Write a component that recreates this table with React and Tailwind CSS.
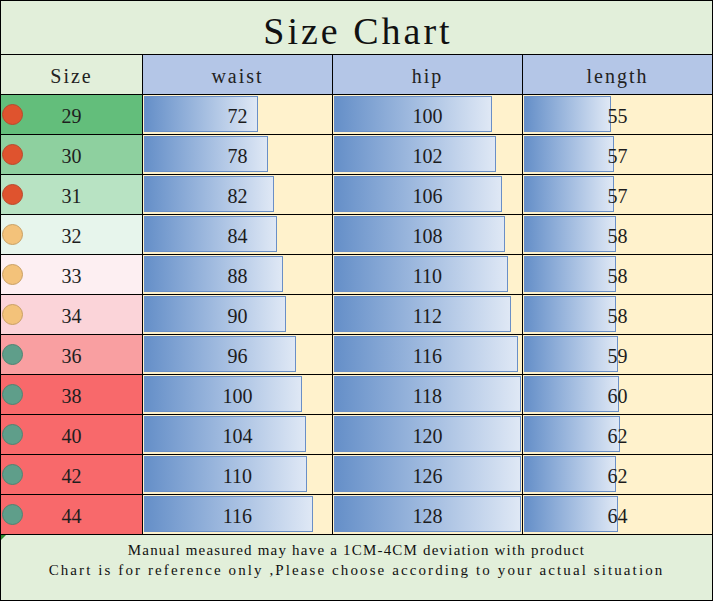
const rows = [
  { size: 29, dot: 'red', bg: 'bg-[#63be7b]', waist: [72, 114], hip: [100, 158], length: [55, 87] },
  { size: 30, dot: 'red', bg: 'bg-[#8ed09f]', waist: [78, 124], hip: [102, 162], length: [57, 90] },
  { size: 31, dot: 'red', bg: 'bg-[#b8e3c3]', waist: [82, 130], hip: [106, 168], length: [57, 90] },
  { size: 32, dot: 'amber', bg: 'bg-[#e7f5ec]', waist: [84, 133], hip: [108, 171], length: [58, 92] },
  { size: 33, dot: 'amber', bg: 'bg-[#fdeff2]', waist: [88, 139], hip: [110, 174], length: [58, 92] },
  { size: 34, dot: 'amber', bg: 'bg-[#fbd4d9]', waist: [90, 142], hip: [112, 177], length: [58, 92] },
  { size: 36, dot: 'teal', bg: 'bg-[#f99fa1]', waist: [96, 152], hip: [116, 184], length: [59, 94] },
  { size: 38, dot: 'teal', bg: 'bg-[#f8696b]', waist: [100, 158], hip: [118, 187], length: [60, 95] },
  { size: 40, dot: 'teal', bg: 'bg-[#f8696b]', waist: [104, 162], hip: [120, 187], length: [62, 96] },
  { size: 42, dot: 'teal', bg: 'bg-[#f8696b]', waist: [110, 163], hip: [126, 187], length: [62, 92] },
  { size: 44, dot: 'teal', bg: 'bg-[#f8696b]', waist: [116, 169], hip: [128, 187], length: [64, 94] },
]

const dotStyles = {
  red: 'bg-[#df532e] border-[#b9482c]',
  amber: 'bg-[#f3c27a] border-[#c9a064]',
  teal: 'bg-[#5f9e8a] border-[#4d8472]',
}

const BarCell = ({ value, width }) => (
  <div className="relative bg-[#fff2cc] h-[39px] flex items-center justify-center">
    {/* data bar behind the number */}
    <div
      className="absolute left-px top-px h-[36px] border border-[#6a8fc6] bg-gradient-to-r from-[#658fc8] to-[#dfe8f5]"
      style={{ width }}
    />
    <span className="relative pt-[3px] text-[20px] text-[#1c1c1c]">{value}</span>
  </div>
)

export default function App() {
  return (
    <div className="w-[713px] h-[601px] bg-black p-px font-['Liberation_Serif',serif]">
      <div className="grid grid-cols-[141px_189px_189px_189px] gap-px">
        {/* Title */}
        <div className="col-span-4 h-[53px] bg-[#e2efda] flex items-center justify-center pt-[8px] pl-[3px] text-[38px] tracking-[3px] text-[#111]">
          Size Chart
        </div>

        {/* Column headings */}
        <div className="h-[39px] bg-[#e2efda] flex items-center justify-center text-[20px] tracking-[2px] text-[#222] pt-[3px]">Size</div>
        <div className="h-[39px] bg-[#b4c6e7] flex items-center justify-center text-[20px] tracking-[2px] text-[#222] pt-[3px]">waist</div>
        <div className="h-[39px] bg-[#b4c6e7] flex items-center justify-center text-[20px] tracking-[2px] text-[#222] pt-[3px]">hip</div>
        <div className="h-[39px] bg-[#b4c6e7] flex items-center justify-center text-[20px] tracking-[2px] text-[#222] pt-[3px]">length</div>

        {rows.map((r) => (
          <div key={r.size} className="contents">
            <div className={`relative h-[39px] flex items-center justify-center ${r.bg}`}>
              <span className={`absolute left-px top-[9px] w-[21px] h-[21px] rounded-full border ${dotStyles[r.dot]}`} />
              <span className="pt-[3px] text-[20px] text-[#1e1e1e]">{r.size}</span>
            </div>
            <BarCell value={r.waist[0]} width={r.waist[1]} />
            <BarCell value={r.hip[0]} width={r.hip[1]} />
            <BarCell value={r.length[0]} width={r.length[1]} />
          </div>
        ))}

        {/* Footer note */}
        <div className="relative col-span-4 h-[65px] bg-[#e2efda] flex flex-col items-center pt-[5px] text-[15px] leading-[20px] text-[#111]">
          <span className="absolute left-0 top-0 w-0 h-0 border-t-[5px] border-r-[5px] border-t-[#2f8a2f] border-r-transparent" />
          <p className="tracking-[1.2px]">Manual measured may have a 1CM-4CM deviation with product</p>
          <p className="tracking-[2.1px]">Chart is for reference only ,Please choose according to your actual situation</p>
        </div>
      </div>
    </div>
  )
}
